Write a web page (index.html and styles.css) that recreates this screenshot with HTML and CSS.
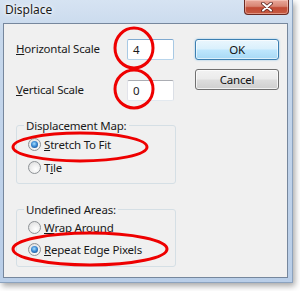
FILE: index.html
```html
<!DOCTYPE html>
<html>
<head>
<meta charset="utf-8">
<link rel="stylesheet" href="styles.css">
</head>
<body>
<div class="window">
  <div class="titlebar">
    <span class="title">Displace</span>
    <div class="close">
      <svg width="12" height="10" viewBox="0 0 12 10">
        <path d="M2 1.5 L10 8.5 M10 1.5 L2 8.5" stroke="#5b2520" stroke-width="3.6" stroke-linecap="round"/>
        <path d="M2 1.5 L10 8.5 M10 1.5 L2 8.5" stroke="#ffffff" stroke-width="2" stroke-linecap="round"/>
      </svg>
    </div>
  </div>
  <div class="client">
    <div class="left">
      <div class="row">
        <span class="label"><u>H</u>orizontal Scale</span>
        <div class="input focus">4</div>
      </div>
      <div class="row row2">
        <span class="label"><u>V</u>ertical Scale</span>
        <div class="input">0</div>
      </div>
      <fieldset class="group g1">
        <legend>Displacement Map:</legend>
        <div class="radio checked"><span class="dot"></span><span><u>S</u>tretch To Fit</span></div>
        <div class="radio"><span class="dot"></span><span>T<u>i</u>le</span></div>
      </fieldset>
      <fieldset class="group g2">
        <legend>Undefined Areas:</legend>
        <div class="radio"><span class="dot"></span><span><u>W</u>rap Around</span></div>
        <div class="radio checked"><span class="dot"></span><span><u>R</u>epeat Edge Pixels</span></div>
      </fieldset>
    </div>
    <div class="right">
      <div class="btn default">OK</div>
      <div class="btn">Cancel</div>
    </div>
  </div>
</div>
<svg class="marks" width="300" height="291" viewBox="0 0 300 291">
  <g fill="none" stroke="#ee0000" stroke-width="3">
    <ellipse cx="134" cy="48" rx="19" ry="20"/>
    <ellipse cx="134" cy="89" rx="19" ry="19"/>
    <ellipse cx="80" cy="147" rx="67" ry="14"/>
    <ellipse cx="90" cy="249" rx="77" ry="16"/>
  </g>
</svg>
</body>
</html>
```

FILE: styles.css
```css
html, body {
  margin: 0;
  padding: 0;
  background: #ffffff;
}
body {
  position: relative;
  width: 300px;
  height: 291px;
  overflow: hidden;
  font-family: "Noto Sans", "Open Sans", sans-serif;
  font-size: 12px;
  color: #1a1a1a;
}
.window {
  width: 293px;
  height: 283px;
  box-sizing: border-box;
  padding: 0 4px 4px 3px;
  background: linear-gradient(180deg, #d6e3f2 0%, #c7d8ec 12%, #bfd2ea 60%, #b9cee8 100%);
  border-right: 1px solid #8ca3bf;
  border-bottom: 1px solid #8ca3bf;
  box-shadow: 2px 3px 6px rgba(0, 0, 0, 0.35);
  display: flex;
  flex-direction: column;
}
.titlebar {
  height: 23px;
  display: flex;
  justify-content: space-between;
  align-items: flex-start;
}
.title {
  padding-left: 2px;
  padding-top: 2px;
  font-size: 12px;
  line-height: 16px;
  color: #1b1b1b;
  text-shadow: 0 0 6px #ffffff, 0 0 3px #ffffff;
}
.close {
  width: 45px;
  height: 15px;
  box-sizing: border-box;
  margin-right: -1px;
  border: 1px solid #6b2a22;
  border-top: none;
  border-radius: 0 0 4px 4px;
  background: linear-gradient(180deg, #e9a99b 0%, #d88573 45%, #c24a34 55%, #c65a42 100%);
  box-shadow: inset 0 0 0 1px rgba(255, 220, 210, 0.45);
  display: flex;
  align-items: center;
  justify-content: center;
}
.close svg {
  display: block;
}
.client {
  height: 256px;
  box-sizing: border-box;
  border: 1px solid #76879d;
  background: #f0f0f0;
  padding: 15px 0 0 12px;
  display: flex;
  gap: 19px;
  font-size: 11.5px;
  letter-spacing: -0.2px;
}
.left {
  width: 160px;
  display: flex;
  flex-direction: column;
}
.row {
  display: grid;
  grid-template-columns: 111px 47px;
  height: 21px;
  align-items: center;
}
.row2 {
  margin-top: 20px;
}
.label {
  line-height: 16px;
  white-space: nowrap;
}
.input {
  height: 21px;
  box-sizing: border-box;
  border: 1px solid #abadb3;
  border-left-color: #e2e3ea;
  border-right-color: #dbdfe6;
  border-bottom-color: #e3e9ef;
  border-radius: 2px;
  background: #ffffff;
  padding-left: 5px;
  line-height: 19px;
}
.input.focus {
  border-color: #7fa9d0;
  border-left-color: #a8c9e4;
  border-right-color: #a8c9e4;
  border-bottom-color: #b9d5eb;
}
.group {
  margin: 0;
  width: 160px;
  box-sizing: border-box;
  border: 1px solid #d5dfe5;
  border-radius: 3px;
  padding: 4px 0 7px 11px;
  display: flex;
  flex-direction: column;
}
.group legend {
  padding: 0 2px;
  margin-left: -4px;
  line-height: 14px;
  color: #1a1a1a;
}
.g1 {
  margin-top: 18px;
  gap: 7px;
}
.g2 {
  margin-top: 19px;
  padding-top: 3px;
  padding-bottom: 8px;
  gap: 6px;
}
.radio {
  display: flex;
  align-items: center;
  height: 16px;
  white-space: nowrap;
}
.dot {
  width: 13px;
  height: 13px;
  box-sizing: border-box;
  border-radius: 50%;
  border: 1px solid #8e9296;
  background: radial-gradient(circle at 60% 65%, #ffffff 0%, #f1f1f1 40%, #d8d8d8 100%);
  margin-right: 3px;
  position: relative;
  flex: none;
}
.checked .dot::after {
  content: "";
  position: absolute;
  left: 2px;
  top: 2px;
  width: 7px;
  height: 7px;
  border-radius: 50%;
  background: radial-gradient(circle at 45% 40%, #a9e1ff 0%, #3c8ad4 45%, #174f92 85%, #0d3a73 100%);
}
.right {
  width: 84px;
  display: flex;
  flex-direction: column;
  gap: 9px;
}
.btn {
  height: 21px;
  box-sizing: border-box;
  border: 1px solid #707070;
  border-radius: 3px;
  background: linear-gradient(180deg, #f2f2f2 0%, #ebebeb 48%, #dddddd 52%, #cfcfcf 100%);
  box-shadow: inset 0 0 0 1px rgba(255, 255, 255, 0.7);
  text-align: center;
  line-height: 19px;
  color: #111;
}
.btn.default {
  border-color: #3c7fb1;
  background: linear-gradient(180deg, #eaf6fd 0%, #d9f0fc 48%, #bee6fd 52%, #a7d9f5 100%);
  box-shadow: inset 0 0 0 1px rgba(255, 255, 255, 0.6), 0 0 2px rgba(60, 160, 230, 0.6);
}
.marks {
  position: absolute;
  left: 0;
  top: 0;
  pointer-events: none;
}
```
